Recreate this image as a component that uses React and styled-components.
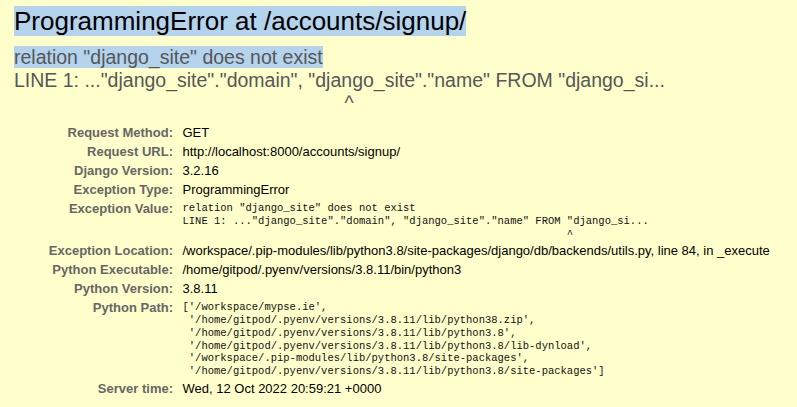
import React from 'react'
import styled, { createGlobalStyle } from 'styled-components'

const GlobalStyle = createGlobalStyle`
    html, body {
        margin: 0;
        padding: 0;
        background: #ffc;
    }
    body {
        font: 13px "Liberation Sans", Arial, sans-serif;
        color: #000;
    }
`

const Summary = styled.div`
    background: #ffc;
    padding: 6px 14px 10px 14px;
`

const Title = styled.h1`
    margin: 0;
    font-size: 26px;
    font-weight: normal;
    line-height: 30px;
    color: #000;
`

const Selected = styled.span`
    background: #b4d3ec;
`

const ExceptionValue = styled.pre`
    margin: 10px 0 8px 0;
    font-family: "Liberation Sans", Arial, sans-serif;
    font-size: 19.5px;
    color: #575757;
    white-space: pre-wrap;
`

const Meta = styled.table`
    border: none;
    border-collapse: collapse;
    background: transparent;
    margin: 0;
`

const Th = styled.th`
    width: 156px;
    padding: 2px 6.5px 2px 3px;
    text-align: right;
    vertical-align: top;
    color: #666;
    font-weight: bold;
    line-height: 15px;
`

const Td = styled.td`
    padding: 2px 3px;
    vertical-align: top;
    line-height: 15px;
    white-space: nowrap;
`

const Mono = styled.pre`
    margin: 0;
    padding-top: 1px;
    margin-bottom: -1.5px;
    font-family: "Liberation Mono", "Courier New", monospace;
    font-size: 10.5px;
    line-height: 12.85px;
    color: #111;
`

const caret = ' '.repeat(61) + '^'
const lineOne = 'LINE 1: ..."django_site"."domain", "django_site"."name" FROM "django_si...'

const pythonPath = [
    "['/workspace/mypse.ie',",
    " '/home/gitpod/.pyenv/versions/3.8.11/lib/python38.zip',",
    " '/home/gitpod/.pyenv/versions/3.8.11/lib/python3.8',",
    " '/home/gitpod/.pyenv/versions/3.8.11/lib/python3.8/lib-dynload',",
    " '/workspace/.pip-modules/lib/python3.8/site-packages',",
    " '/home/gitpod/.pyenv/versions/3.8.11/lib/python3.8/site-packages']"
]

const rows = [
    { label: 'Request Method:', value: 'GET' },
    { label: 'Request URL:', value: 'http://localhost:8000/accounts/signup/' },
    { label: 'Django Version:', value: '3.2.16' },
    { label: 'Exception Type:', value: 'ProgrammingError' },
    {
        label: 'Exception Value:',
        mono: ['relation "django_site" does not exist', lineOne, caret].join('\n')
    },
    {
        label: 'Exception Location:',
        value: '/workspace/.pip-modules/lib/python3.8/site-packages/django/db/backends/utils.py, line 84, in _execute'
    },
    { label: 'Python Executable:', value: '/home/gitpod/.pyenv/versions/3.8.11/bin/python3' },
    { label: 'Python Version:', value: '3.8.11' },
    { label: 'Python Path:', mono: pythonPath.join('\n') },
    { label: 'Server time:', value: 'Wed, 12 Oct 2022 20:59:21 +0000' }
]

const App = () => {
    return (
        <>
            <GlobalStyle />
            <Summary>
                <Title>
                    <Selected>ProgrammingError at /accounts/signup/</Selected>
                </Title>
                <ExceptionValue>
                    <Selected>relation "django_site" does not exist</Selected>
                    {'\n' + lineOne + '\n' + caret}
                </ExceptionValue>
                <Meta>
                    <tbody>
                        {rows.map((row) => (
                            <tr key={row.label}>
                                <Th>{row.label}</Th>
                                <Td>{row.mono ? <Mono>{row.mono}</Mono> : row.value}</Td>
                            </tr>
                        ))}
                    </tbody>
                </Meta>
            </Summary>
        </>
    )
}

export default App
